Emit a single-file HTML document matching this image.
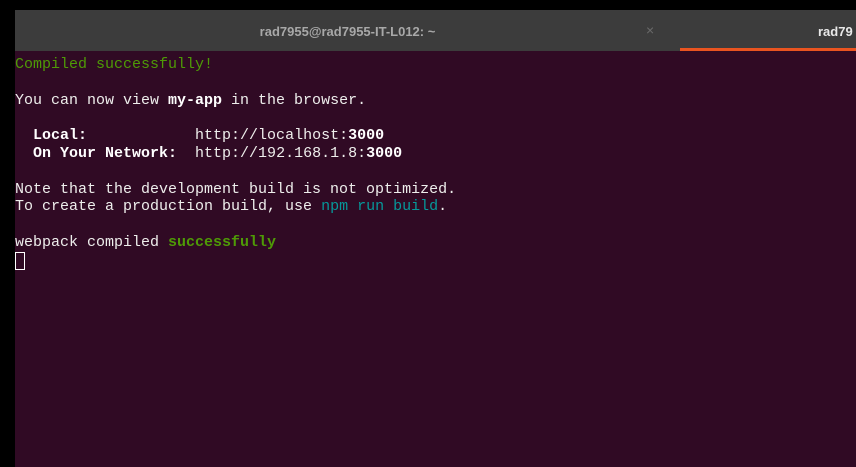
<!DOCTYPE html>
<html><head><style>
html,body{margin:0;padding:0;width:856px;height:467px;overflow:hidden;background:#000;}
.tabs{position:absolute;left:15px;top:10px;width:841px;height:41px;background:#3c3c3c;font-family:"Liberation Sans",sans-serif;font-size:13px;font-weight:bold;}
.t1{position:absolute;left:0;width:665px;top:0;height:41px;line-height:43px;text-align:center;color:#a8a8a8;}
.x{position:absolute;left:631px;top:0;line-height:41px;color:#6a6a6a;font-weight:normal;font-size:14px;}
.t2{position:absolute;left:803px;top:0;line-height:43px;color:#e8e8e8;}
.ul{position:absolute;left:665px;top:38px;width:176px;height:3px;background:#e95420;}
.term{position:absolute;left:15px;top:51px;width:841px;height:416px;background:#300a24;}
pre{margin:0;position:absolute;left:0;top:5px;font-family:"Liberation Mono",monospace;font-size:15px;line-height:17.8px;color:#eeeeec;}
.g{color:#4e9a06}.c{color:#06989a}b{color:#fff}
.cur{display:inline-block;width:8px;height:16px;border:1px solid #fff;vertical-align:-4px;}
</style></head><body>
<div class="tabs"><div class="t1">rad7955@rad7955-IT-L012: ~</div><div class="x">×</div><div class="t2">rad79</div><div class="ul"></div></div>
<div class="term"><pre><span class="g">Compiled successfully!</span>

You can now view <b>my-app</b> in the browser.

  <b>Local:</b>            http://localhost:<b>3000</b>
  <b>On Your Network:</b>  http://192.168.1.8:<b>3000</b>

Note that the development build is not optimized.
To create a production build, use <span class="c">npm run build</span>.

webpack compiled <b class="g">successfully</b>
<span class="cur"></span></pre></div>
</body></html>
